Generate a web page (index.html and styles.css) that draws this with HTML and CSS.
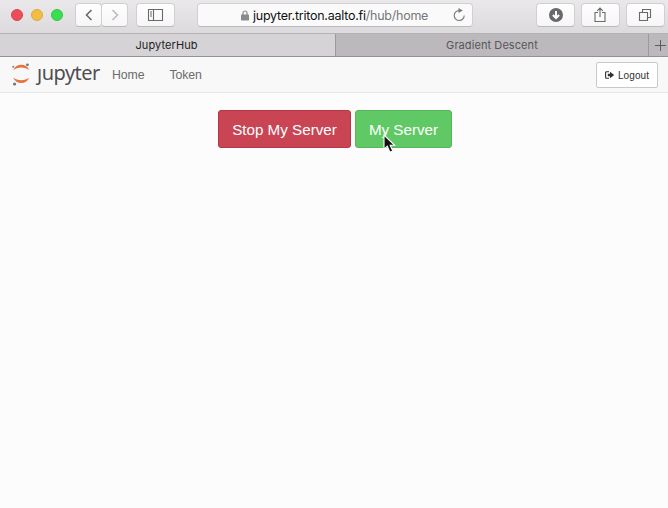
FILE: index.html
```html
<!DOCTYPE html>
<html lang="en">
<head>
<meta charset="utf-8">
<title>JupyterHub</title>
<link rel="stylesheet" href="styles.css">
</head>
<body>
<header class="toolbar">
  <div class="lights"><i class="light red"></i><i class="light yellow"></i><i class="light green"></i></div>
  <div class="history">
    <button class="tool back"><svg width="8" height="12" viewBox="0 0 8 12"><path d="M6.5 1 1.5 6l5 5"/></svg></button>
    <button class="tool forward"><svg width="8" height="12" viewBox="0 0 8 12"><path d="m1.5 1 5 5-5 5"/></svg></button>
  </div>
  <button class="tool sidebar"><svg width="15" height="12" viewBox="0 0 15 12"><path d="M.5.5h14v11H.5zM5.5.5v11M2 3h2M2 5h2M2 7h2"/></svg></button>
  <div class="address">
    <svg class="lock" width="8" height="11" viewBox="0 0 8 11"><path class="shackle" d="M2 5V3a2 2 0 0 1 4 0v2"/><rect y="4.5" width="8" height="6" rx=".7"/></svg>
    <span class="url">jupyter.triton.aalto.fi<span class="path">/hub/home</span></span>
    <svg class="reload" width="13" height="14" viewBox="0 0 13 14"><path d="M6 2.5A5 5 0 1 0 11.2 7.5"/><path class="fill" d="M5.5 0v5l4.3-2.5z"/></svg>
  </div>
  <div class="actions">
    <button class="tool"><svg width="14" height="14" viewBox="0 0 14 14"><circle class="fill" cx="7" cy="7" r="7"/><path class="arrow" d="M7 3v7M3.9 7 7 10.1 10.1 7"/></svg></button>
    <button class="tool"><svg width="13" height="16" viewBox="0 0 13 16"><path d="M4 5.5H1v9h10v-9H8M6 10V1M3.2 3.8 6 1l2.8 2.8"/></svg></button>
    <button class="tool"><svg width="13" height="13" viewBox="0 0 13 13"><path d="M.5 3.5h8v8h-8zM3.5 3.5v-3h8v8h-3"/></svg></button>
  </div>
</header>
<nav class="tabs">
  <div class="tab active">JupyterHub</div>
  <div class="tab">Gradient Descent</div>
  <div class="add"><svg width="11" height="11" viewBox="0 0 11 11"><path d="M5.5 0v11M0 5.5h11"/></svg></div>
</nav>
<nav class="navbar">
  <a class="brand">
    <svg width="19" height="25" viewBox="0 0 20 26"><path class="orange" d="M1.2 8.4C4.5.8 15 .8 18.2 8.4 13.5 4.8 6 4.8 1.2 8.4zM1.2 16.2C6 20 13.5 20 18.2 16.2 15 24 4.5 24 1.2 16.2z"/><circle cx="16.2" cy="2.8" r="1.5"/><circle cx="1.3" cy="4.8" r="1"/><circle cx="2.7" cy="23" r="1.7"/></svg>
    <span class="wordmark">ȷupyter</span>
  </a>
  <a class="link home">Home</a>
  <a class="link token">Token</a>
  <a class="logout"><svg width="10" height="8" viewBox="0 0 10 8"><path class="door" d="M4 .7H1.5Q.6.7.6 1.6v4.8q0 .9.9.9H4"/><path d="M2.8 2.7H5V.7L9.2 4 5 7.3v-2H2.8z"/></svg><span>Logout</span></a>
</nav>
<main class="content">
  <a class="btn stop">Stop My Server</a>
  <a class="btn server"><span>My Server</span>
    <svg class="cursor" width="14" height="20" viewBox="0 0 14 20"><path d="M1 1v14.2l3.3-3 2.6 6 2.9-1.2-2.6-5.7h4.4z"/></svg>
  </a>
</main>
</body>
</html>
```
FILE: styles.css
```css
* { box-sizing: border-box; }
body { margin: 0; height: 508px; overflow: hidden; background: #fcfcfc; font-family: "Liberation Sans", Arial, sans-serif; }
svg { display: block; flex: none; overflow: visible; }
.toolbar { display: flex; align-items: flex-start; height: 33px; padding: 3px 3px 0 11px; background: linear-gradient(#ebe8eb, #dddadd); font-family: Inter, sans-serif; }
.lights { display: flex; gap: 8px; padding-top: 6px; }
.light { width: 12px; height: 12px; border-radius: 50%; }
.red { background: #ed4c59; border: 1px solid #d84450; }
.yellow { background: #f1bd42; border: 1px solid #dcaa3d; }
.green { background: #37df51; border: 1px solid #32c648; }
.history { display: flex; margin-left: 12px; }
.tool { display: flex; align-items: center; justify-content: center; width: 39px; height: 24px; padding: 0; border: 1px solid #d2cfd2; border-bottom-color: #bcb9bc; border-radius: 4px; background: linear-gradient(#fefefe, #f7f6f7); }
.tool svg { fill: none; stroke: #6a696a; stroke-width: 1.1; }
.history .tool { width: 27px; }
.history .tool + .tool { margin-left: -1px; }
.history .tool svg { stroke-width: 1.6; }
.history .forward svg { stroke: #bdbcbd; }
.sidebar { margin-left: 8px; }
.tool .fill { fill: #69686a; stroke: none; }
.tool .arrow { stroke: #fff; stroke-width: 2; }
.address { display: flex; align-items: center; width: 276px; height: 24px; margin-left: 22px; padding: 0 6px 0 43px; border: 1px solid #d2cfd2; border-bottom-color: #bcb9bc; border-radius: 4px; background: #fbfafb; }
.lock { fill: #8b8a8b; margin-right: 4px; }
.shackle { fill: none; stroke: #8b8a8b; stroke-width: 1.2; }
.url { width: 176px; padding-top: 1px; color: #111; font-size: 12.5px; line-height: 20px; letter-spacing: -.24px; white-space: nowrap; }
.path { color: #777; }
.reload { margin-left: auto; fill: none; stroke: #7b7a7b; stroke-width: 1.1; }
.reload .fill { fill: #7b7a7b; stroke: none; }
.actions { display: flex; gap: 6px; margin-left: auto; }
.tabs { display: flex; height: 24px; border-top: 1px solid #b5b2b5; border-bottom: 1px solid #949195; background: #bcb9bc; font-family: Inter, sans-serif; font-size: 11px; line-height: 23px; text-align: center; color: #58565a; }
.tab { width: 312px; letter-spacing: .08px; }
.tab.active { width: 336px; padding-right: 2px; border-right: 1px solid #9c999d; background: #d6d3d6; color: #222; }
.add { display: flex; align-items: center; justify-content: center; width: 20px; padding-left: 4px; border-left: 1px solid #9c999d; }
.add svg { stroke: #5e5c60; stroke-width: 1; }
.navbar { display: flex; align-items: center; height: 36px; padding: 0 10px 0 11px; border-bottom: 1px solid #e6e6e6; background: #f8f8f8; }
.brand { display: flex; align-items: center; width: 101px; height: 35px; padding-left: 1px; }
.brand svg { fill: #77777b; }
.brand .orange { fill: #e5733e; }
.wordmark { margin: -3px 0 0 6px; color: #4e4e50; font: 20px/24px "Noto Sans", sans-serif; letter-spacing: -.5px; }
.link { color: #6c6c6c; font-size: 12.3px; line-height: 18px; letter-spacing: -.1px; }
.token { margin-left: 25px; }
.logout { display: flex; align-items: center; justify-content: center; gap: 3px; width: 62px; height: 26px; margin-left: auto; padding-top: 1px; border: 1px solid #c9c9c9; border-radius: 2px; background: #fff; color: #303030; font-size: 10px; letter-spacing: .1px; }
.logout svg { fill: #303030; }
.logout .door { fill: none; stroke: #303030; stroke-width: 1.1; }
.content { display: flex; justify-content: center; gap: 4px; padding: 17px 0 0 2px; }
.btn { position: relative; display: flex; align-items: center; justify-content: center; height: 38px; border: 1px solid; border-radius: 3px; color: #fff; font-size: 15.2px; line-height: 20px; white-space: nowrap; padding-top: 2px; }
.stop { width: 133px; background: #c94553; border-color: #b53745; }
.server { width: 97px; background: #60c965; border-color: #55b65a; }
.cursor { position: absolute; left: 27px; top: 23px; fill: #111; stroke: #fff; stroke-width: 1.1; }
```
